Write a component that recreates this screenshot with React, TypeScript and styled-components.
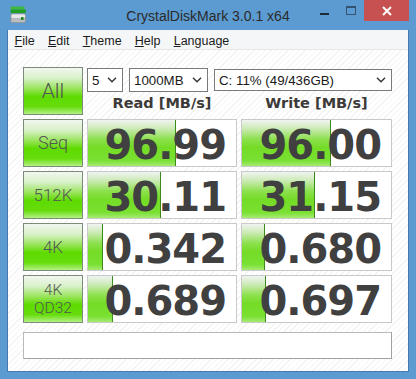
import React from "react";
import styled, { createGlobalStyle } from "styled-components";

const GlobalStyle = createGlobalStyle`
  html, body {
    margin: 0;
    padding: 0;
    background: #5b9bd1;
  }
`;

type Row = {
  label: string[];
  size: number;
  read: string;
  write: string;
  readFill: number;
  writeFill: number;
};

const rows: Row[] = [
  { label: ["Seq"], size: 18, read: "96.99", write: "96.00", readFill: 88, writeFill: 89 },
  { label: ["512K"], size: 17, read: "30.11", write: "31.15", readFill: 73, writeFill: 73 },
  { label: ["4K"], size: 17, read: "0.342", write: "0.680", readFill: 15, writeFill: 23 },
  { label: ["4K", "QD32"], size: 15.5, read: "0.689", write: "0.697", readFill: 25, writeFill: 24 },
];

const menu = ["File", "Edit", "Theme", "Help", "Language"];

export default function App() {
  return (
    <>
      <GlobalStyle />
      <S.Window>
        <S.TitleBar>
          <S.IconSlot>
            <AppIcon />
          </S.IconSlot>
          <S.Title>CrystalDiskMark 3.0.1 x64</S.Title>
          <S.Controls>
            <S.CtrlButton $w={26}>
              <S.MinGlyph />
            </S.CtrlButton>
            <S.CtrlButton $w={27}>
              <S.MaxGlyph />
            </S.CtrlButton>
            <S.CloseButton>
              <svg width="10" height="10" viewBox="0 0 10 10">
                <path d="M1 1 L9 9 M9 1 L1 9" stroke="#fff" strokeWidth="2" />
              </svg>
            </S.CloseButton>
          </S.Controls>
        </S.TitleBar>
        <S.Body>
          <S.Client>
            <S.MenuBar>
              {menu.map((m) => (
                <S.MenuItem key={m}>
                  <u>{m[0]}</u>
                  {m.slice(1)}
                </S.MenuItem>
              ))}
            </S.MenuBar>
            <S.Content>
              <S.Grid>
                <S.TestButton $size={21}>All</S.TestButton>
                <S.Header>
                  <S.Selects>
                    <Select width={36} value="5" />
                    <Select width={79} value="1000MB" />
                    <Select grow value="C: 11% (49/436GB)" />
                  </S.Selects>
                  <S.Headings>
                    <S.Heading>Read [MB/s]</S.Heading>
                    <S.Heading>Write [MB/s]</S.Heading>
                  </S.Headings>
                </S.Header>
                {rows.map((r) => (
                  <React.Fragment key={r.label.join(" ")}>
                    <S.TestButton $size={r.size}>
                      {r.label.map((l) => (
                        <span key={l}>{l}</span>
                      ))}
                    </S.TestButton>
                    <S.Value $fill={r.readFill}>{r.read}</S.Value>
                    <S.Value $fill={r.writeFill}>{r.write}</S.Value>
                  </React.Fragment>
                ))}
              </S.Grid>
              <S.Status />
            </S.Content>
          </S.Client>
        </S.Body>
      </S.Window>
    </>
  );
}

function Select({ value, width, grow }: { value: string; width?: number; grow?: boolean }) {
  return (
    <S.Select $w={width} $grow={grow}>
      <span>{value}</span>
      <svg width="10" height="6" viewBox="0 0 10 6">
        <path d="M1 0.8 L5 4.8 L9 0.8" fill="none" stroke="#333" strokeWidth="1.4" />
      </svg>
    </S.Select>
  );
}

function AppIcon() {
  return (
    <svg width="17" height="18" viewBox="0 0 17 18">
      <rect x="0.5" y="0.5" width="14" height="3" rx="1" fill="#3cb83c" />
      <rect x="0.5" y="3.5" width="15.5" height="3.5" rx="1" fill="#22a022" />
      <rect x="0.5" y="7.5" width="15.5" height="9.5" rx="2" fill="#8a8f94" />
      <rect x="1.2" y="8.2" width="14" height="4" rx="1.5" fill="#e6e8ea" />
      <rect x="1.2" y="12.2" width="14" height="4" rx="1" fill="#b9bdc1" />
      <rect x="11" y="11" width="2.5" height="3" fill="#1f8a1f" />
    </svg>
  );
}

const S = {
  Window: styled.div`
    width: 416px;
    height: 379px;
    background: #5b9bd1;
    display: flex;
    flex-direction: column;
    overflow: hidden;
  `,
  TitleBar: styled.div`
    height: 30px;
    display: grid;
    grid-template-columns: 1fr auto 1fr;
    align-items: start;
  `,
  IconSlot: styled.div`
    padding: 6px 0 0 10px;
  `,
  Title: styled.div`
    font-family: "Liberation Sans", Arial, sans-serif;
    font-size: 14px;
    color: #2b2b2b;
    line-height: 30px;
    padding-top: 1px;
  `,
  Controls: styled.div`
    display: flex;
    justify-content: flex-end;
    padding-right: 7px;
  `,
  CtrlButton: styled.div<{ $w: number }>`
    width: ${(p) => p.$w}px;
    height: 21px;
    display: flex;
    align-items: center;
    justify-content: center;
  `,
  MinGlyph: styled.div`
    width: 9px;
    height: 2px;
    background: #1e2a36;
    margin-top: 6px;
  `,
  MaxGlyph: styled.div`
    width: 8px;
    height: 6px;
    border: 1px solid #35526e;
    border-top-width: 2px;
  `,
  CloseButton: styled.div`
    width: 45px;
    height: 21px;
    background: #c75050;
    display: flex;
    align-items: center;
    justify-content: center;
  `,
  Body: styled.div`
    flex: 1;
    display: flex;
    padding: 0 7px 7px 7px;
    min-height: 0;
  `,
  Client: styled.div`
    flex: 1;
    display: flex;
    flex-direction: column;
    border: 1px solid #4679ad;
    border-top: none;
  `,
  MenuBar: styled.div`
    height: 19px;
    display: flex;
    align-items: center;
    background: #f5f6f7;
    border-bottom: 1px solid #e4e7ea;
  `,
  MenuItem: styled.span`
    font-family: "Liberation Sans", Arial, sans-serif;
    font-size: 12.5px;
    color: #1a1a1a;
    padding: 2px 6.6px 0 6.6px;
    u {
      text-decoration-thickness: 1px;
      text-underline-offset: 1px;
    }
  `,
  Content: styled.div`
    flex: 1;
    padding: 17px 16px 0 15px;
    background: repeating-linear-gradient(
      -45deg,
      #ffffff 0px,
      #ffffff 3px,
      #f3f3f3 3px,
      #f3f3f3 4px
    );
  `,
  Grid: styled.div`
    display: grid;
    grid-template-columns: 60px 150px 151px;
    grid-template-rows: 48px repeat(4, 48px);
    column-gap: 4px;
    row-gap: 4px;
  `,
  TestButton: styled.div<{ $size: number }>`
    box-sizing: border-box;
    height: 48px;
    border: 1px solid #7c8b7c;
    background: linear-gradient(
      to bottom,
      #f2f6f0 0%,
      #d9f1c9 22%,
      #98e45a 45%,
      #5edb00 62%,
      #66dd0c 84%,
      #b4f184 100%
    );
    display: flex;
    flex-direction: column;
    align-items: center;
    justify-content: center;
    font-family: Roboto, "DejaVu Sans", sans-serif;
    font-weight: 300;
    font-size: ${(p) => p.$size}px;
    line-height: 18px;
    color: #525652;
  `,
  Header: styled.div`
    grid-column: 2 / 4;
    display: flex;
    flex-direction: column;
  `,
  Selects: styled.div`
    display: flex;
    gap: 6px;
    padding-top: 1px;
    align-items: center;
  `,
  Select: styled.div<{ $w?: number; $grow?: boolean }>`
    box-sizing: border-box;
    ${(p) => (p.$grow ? "flex: 1; height: 22px;" : `width: ${p.$w}px; height: 24px;`)}
    border: 1px solid #7a7a7a;
    background: #fff;
    display: flex;
    align-items: center;
    justify-content: space-between;
    padding: 0 5px 0 4px;
    font-family: "Liberation Sans", Arial, sans-serif;
    font-size: 13.3px;
    color: #1a1a1a;
  `,
  Headings: styled.div`
    flex: 1;
    display: grid;
    grid-template-columns: 150px 151px;
    column-gap: 4px;
  `,
  Heading: styled.div`
    text-align: center;
    font-family: "DejaVu Sans", Verdana, sans-serif;
    font-weight: bold;
    font-size: 14.5px;
    line-height: 23px;
    color: #3c3a38;
  `,
  Value: styled.div<{ $fill: number }>`
    box-sizing: border-box;
    height: 48px;
    border: 1px solid #c9c9c9;
    background-color: #fff;
    background-image: linear-gradient(to left, #3d8a1c 0, #3d8a1c 1px, transparent 1px),
      linear-gradient(
        to bottom,
        #f1f3f1 0%,
        #cdebb8 18%,
        #8ce04c 42%,
        #74dc26 60%,
        #7ae032 88%,
        #a6ea74 100%
      );
    background-repeat: no-repeat;
    background-size: ${(p) => p.$fill}px 100%;
    text-align: right;
    padding: 3px 10px 0 0;
    font-family: "DejaVu Sans", Verdana, sans-serif;
    font-weight: bold;
    font-size: 40px;
    letter-spacing: -1px;
    line-height: 44px;
    color: #404040;
  `,
  Status: styled.div`
    box-sizing: border-box;
    margin-top: 9px;
    height: 27px;
    background: #fff;
    border: 1px solid #b9b9b9;
    border-right-color: #a2a2a2;
    border-bottom-color: #a2a2a2;
  `,
};
